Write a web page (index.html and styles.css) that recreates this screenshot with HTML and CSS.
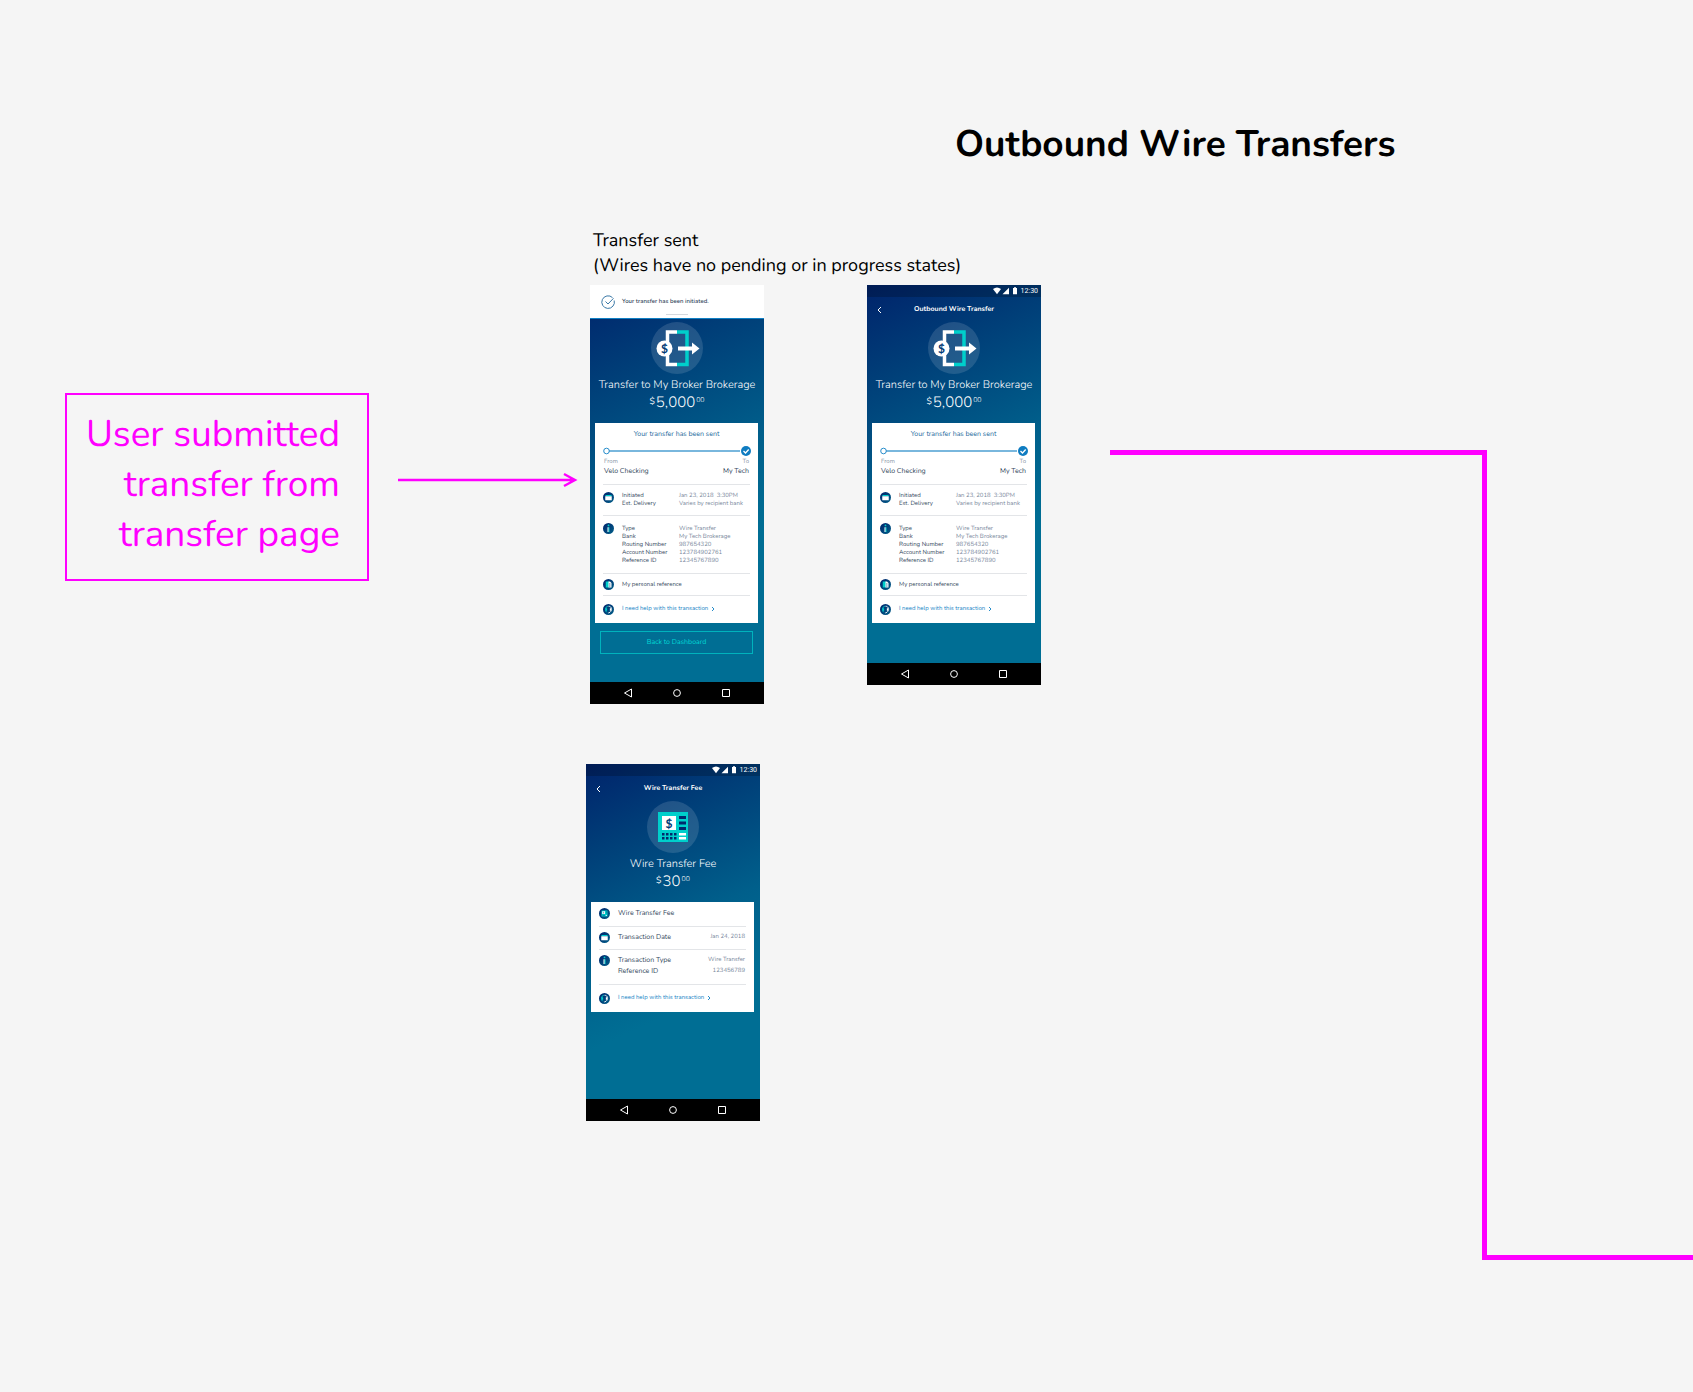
FILE: index.html
```html
<!DOCTYPE html>
<html lang="en">
<head>
<meta charset="utf-8">
<title>Outbound Wire Transfers</title>
<link rel="stylesheet" href="styles.css">
</head>
<body>
<svg class="defs" aria-hidden="true">
  <linearGradient id="disc" x1="0" y1="0" x2="1" y2="1"><stop offset="0" stop-color="#00226b"/><stop offset="1" stop-color="#006089"/></linearGradient>
  <symbol id="i-transfer" viewBox="0 0 52 52">
    <circle cx="26" cy="26" r="26" fill="#fff" fill-opacity=".13"/>
    <path d="M26 10H16.500V42.500H26" fill="none" stroke="#fff" stroke-width="3.500"/>
    <path d="M26 10H36V42.500H26" fill="none" stroke="#00cfcb" stroke-width="3.500"/>
    <path d="M27 24.500H41V20.500L48.500 26.500L41 32.500V28.500H27Z" fill="#fff"/>
    <circle cx="13.500" cy="26.500" r="8" fill="#fff"/>
  </symbol>
  <symbol id="i-fee" viewBox="0 0 52 52">
    <circle cx="26" cy="26" r="26" fill="#fff" fill-opacity=".13"/>
    <path d="M11 11H41V41H11Z" fill="#00cfcb"/>
    <path d="M15 15H29V29H15ZM32 32H39V34.500H32ZM32 36H39V38.500H32Z" fill="#fff"/>
    <path d="M32 15H39V18H32ZM32 20.500H39V23.500H32ZM32 26H39V29H32ZM15 32H17.500V34.500H15ZM19 32H21.500V34.500H19ZM23 32H25.500V34.500H23ZM27 32H29.500V34.500H27ZM15 36H17.500V38.500H15ZM19 36H21.500V38.500H19ZM23 36H25.500V38.500H23ZM27 36H29.500V38.500H27Z" fill="#002a6c"/>
  </symbol>
  <symbol id="i-calendar" viewBox="0 0 22 22">
    <circle cx="11" cy="11" r="11" fill="url(#disc)"/>
    <path d="M5 6H17V8.500H5Z" fill="#00cfcb"/><path d="M4.500 8.500H17.500V16.500H4.500Z" fill="#fff"/>
  </symbol>
  <symbol id="i-info" viewBox="0 0 22 22">
    <circle cx="11" cy="11" r="11" fill="url(#disc)"/>
    <circle cx="11" cy="4.800" r="1.800" fill="#00cfcb"/><path d="M9 8.500H11.500V18H9Z" fill="#fff"/><path d="M11.200 8.500H13V18H11.200Z" fill="#00cfcb"/>
  </symbol>
  <symbol id="i-note" viewBox="0 0 22 22">
    <circle cx="11" cy="11" r="11" fill="url(#disc)"/>
    <path d="M5.500 5H12V17H5.500Z" fill="#00cfcb"/><path d="M11 5H14L17 8V17H11Z" fill="#fff"/><path d="M12 9.500H15M12 12H15M12 14.500H15" stroke="#00457a"/>
  </symbol>
  <symbol id="i-help" viewBox="0 0 22 22">
    <circle cx="11" cy="11" r="11" fill="url(#disc)"/>
    <path d="M9.500 4.500C4 6 3.500 13 7.500 16.500" fill="none" stroke="#00cfcb" stroke-width="2"/><path d="M11 4.500C17.500 4.500 19.500 12 14 16.500L10.500 18" fill="none" stroke="#fff" stroke-width="1.800"/><path d="M7 8.500V13.500" stroke="#00cfcb" stroke-width="2.500"/><path d="M15 8.500V13.500" stroke="#fff" stroke-width="2.500"/>
  </symbol>
  <symbol id="i-feemini" viewBox="0 0 22 22">
    <circle cx="11" cy="11" r="11" fill="url(#disc)"/>
    <path d="M5 5H17V17H5Z" fill="#00cfcb"/><path d="M6.500 6.500H12V12H6.500ZM13.500 14H16V15.500H13.500Z" fill="#fff"/><path d="M9.300 7.500V11M14 7.500H16M14 10H16M7 14.500H12" stroke="#003a75" stroke-width="1.100"/>
  </symbol>
  <symbol id="i-status" viewBox="0 0 24 8">
    <path d="M0 2Q4 -1 8 2L4 7.200Z" fill="#fff"/><path d="M16 .8V7.200H9.500Z" fill="#fff"/><path d="M20 1H21V.3H23V1H24V7.200H20Z" fill="#fff"/>
  </symbol>
  <symbol id="i-back" viewBox="0 0 8 8"><path d="M6 1L3 4L6 7" fill="none" stroke="#fff" stroke-width="1"/></symbol>
  <symbol id="i-chevron" viewBox="0 0 4 6"><path d="M1 1L3 3L1 5" fill="none" stroke="#1080c4" stroke-width=".9"/></symbol>
  <symbol id="i-done" viewBox="0 0 14 14">
    <path d="M13.200 5.500A6.300 6.300 0 1 1 11.500 2.600" fill="none" stroke="#24699c" stroke-width=".9"/><path d="M4.500 6.500L7 9L12.500 3.300" fill="none" stroke="#24699c" stroke-width=".9"/>
  </symbol>
  <symbol id="i-track" viewBox="0 0 148 10">
    <path d="M6 5H137" stroke="#4c9fd2" stroke-width="1.600"/>
    <circle cx="3.500" cy="5" r="2.800" fill="#fff" stroke="#1080c4" stroke-width=".9"/>
    <circle cx="143" cy="5" r="5" fill="#0f7cc1"/><path d="M140.500 5L142.500 7L145.700 3.500" fill="none" stroke="#fff" stroke-width="1.300"/>
  </symbol>
  <symbol id="i-navback" viewBox="0 0 10 10"><path d="M8.500 1V9L1.500 5Z" fill="none" stroke="#fff"/></symbol>
  <symbol id="i-navhome" viewBox="0 0 10 10"><circle cx="5" cy="5" r="3.400" fill="none" stroke="#fff"/></symbol>
  <symbol id="i-navapps" viewBox="0 0 10 10"><path d="M1.500 1.500H8.500V8.500H1.500Z" fill="none" stroke="#fff"/></symbol>
</svg>

<main class="canvas">
  <h1 class="board-title">Outbound Wire Transfers</h1>
  <p class="caption">Transfer sent<br>(Wires have no pending or in progress states)</p>
  <p class="trigger">User submitted transfer from transfer page</p>
  <svg class="arrow" viewBox="0 0 180 16" aria-hidden="true"><path d="M0 8H177M166 2L177 8L166 14" fill="none" stroke="#f0f" stroke-width="2.400"/></svg>
  <div class="link-down"></div>
  <div class="link-out"></div>

  <article class="phone phone-initiated">
    <div class="toast"><svg class="done"><use href="#i-done"/></svg><span>Your transfer has been initiated.</span><i class="handle"></i></div>
    <header class="hero hero-tight">
      <svg class="hero-icon" viewBox="0 0 52 52"><use href="#i-transfer"/><text x="13.500" y="31" text-anchor="middle" class="dollar">$</text></svg>
      <h2>Transfer to My Broker Brokerage</h2>
      <p class="amount"><span class="cur">$</span>5,000<span class="minor">00</span></p>
    </header>
    <section class="card">
      <h3>Your transfer has been sent</h3>
      <svg class="track"><use href="#i-track"/></svg>
      <div class="ends"><p><small>From</small>Velo Checking</p><p><small>To</small>My Tech</p></div>
      <div class="row details"><svg class="icon"><use href="#i-calendar"/></svg>
        <dl><dt>Initiated</dt><dd>Jan 23, 2018 &nbsp;3:30PM</dd><dt>Est. Delivery</dt><dd>Varies by recipient bank</dd></dl></div>
      <div class="row details"><svg class="icon"><use href="#i-info"/></svg>
        <dl class="long"><dt>Type</dt><dd>Wire Transfer</dd><dt>Bank</dt><dd>My Tech Brokerage</dd><dt>Routing Number</dt><dd>987654320</dd><dt>Account Number</dt><dd>123784902761</dd><dt>Reference ID</dt><dd>12345767890</dd></dl></div>
      <div class="row note"><svg class="icon"><use href="#i-note"/></svg><span>My personal reference</span></div>
      <div class="row help"><svg class="icon"><use href="#i-help"/></svg><a href="#help">I need help with this transaction <svg class="chevron"><use href="#i-chevron"/></svg></a></div>
    </section>
    <button class="dashboard" type="button">Back to Dashboard</button>
    <nav class="softkeys"><svg><use href="#i-navback"/></svg><svg><use href="#i-navhome"/></svg><svg><use href="#i-navapps"/></svg></nav>
  </article>

  <article class="phone phone-sent">
    <div class="status"><svg><use href="#i-status"/></svg><span>12:30</span></div>
    <div class="appbar"><button class="back" type="button" aria-label="Back"><svg><use href="#i-back"/></svg></button><strong>Outbound Wire Transfer</strong></div>
    <header class="hero">
      <svg class="hero-icon" viewBox="0 0 52 52"><use href="#i-transfer"/><text x="13.500" y="31" text-anchor="middle" class="dollar">$</text></svg>
      <h2>Transfer to My Broker Brokerage</h2>
      <p class="amount"><span class="cur">$</span>5,000<span class="minor">00</span></p>
    </header>
    <section class="card">
      <h3>Your transfer has been sent</h3>
      <svg class="track"><use href="#i-track"/></svg>
      <div class="ends"><p><small>From</small>Velo Checking</p><p><small>To</small>My Tech</p></div>
      <div class="row details"><svg class="icon"><use href="#i-calendar"/></svg>
        <dl><dt>Initiated</dt><dd>Jan 23, 2018 &nbsp;3:30PM</dd><dt>Est. Delivery</dt><dd>Varies by recipient bank</dd></dl></div>
      <div class="row details"><svg class="icon"><use href="#i-info"/></svg>
        <dl class="long"><dt>Type</dt><dd>Wire Transfer</dd><dt>Bank</dt><dd>My Tech Brokerage</dd><dt>Routing Number</dt><dd>987654320</dd><dt>Account Number</dt><dd>123784902761</dd><dt>Reference ID</dt><dd>12345767890</dd></dl></div>
      <div class="row note"><svg class="icon"><use href="#i-note"/></svg><span>My personal reference</span></div>
      <div class="row help"><svg class="icon"><use href="#i-help"/></svg><a href="#help">I need help with this transaction <svg class="chevron"><use href="#i-chevron"/></svg></a></div>
    </section>
    <nav class="softkeys"><svg><use href="#i-navback"/></svg><svg><use href="#i-navhome"/></svg><svg><use href="#i-navapps"/></svg></nav>
  </article>

  <article class="phone phone-fee">
    <div class="status"><svg><use href="#i-status"/></svg><span>12:30</span></div>
    <div class="appbar"><button class="back" type="button" aria-label="Back"><svg><use href="#i-back"/></svg></button><strong>Wire Transfer Fee</strong></div>
    <header class="hero">
      <svg class="hero-icon" viewBox="0 0 52 52"><use href="#i-fee"/><text x="22" y="26.500" text-anchor="middle" class="dollar">$</text></svg>
      <h2>Wire Transfer Fee</h2>
      <p class="amount"><span class="cur">$</span>30<span class="minor">00</span></p>
    </header>
    <section class="card fee-card">
      <div class="row fee"><svg class="icon"><use href="#i-feemini"/></svg><span>Wire Transfer Fee</span></div>
      <div class="row fee"><svg class="icon"><use href="#i-calendar"/></svg><dl class="spread"><dt>Transaction Date</dt><dd>Jan 24, 2018</dd></dl></div>
      <div class="row fee-type"><svg class="icon"><use href="#i-info"/></svg><dl class="spread"><dt>Transaction Type</dt><dd>Wire Transfer</dd><dt>Reference ID</dt><dd>123456789</dd></dl></div>
      <div class="row help"><svg class="icon"><use href="#i-help"/></svg><a href="#help">I need help with this transaction <svg class="chevron"><use href="#i-chevron"/></svg></a></div>
    </section>
    <nav class="softkeys"><svg><use href="#i-navback"/></svg><svg><use href="#i-navhome"/></svg><svg><use href="#i-navapps"/></svg></nav>
  </article>
</main>
</body>
</html>
```
FILE: styles.css
```css
* { box-sizing: border-box; }
body { margin: 0; background: #f5f5f5; color: #000; font-family: Nunito, Lato, sans-serif; text-rendering: geometricPrecision; }
h1, h2, h3, p, dl, dd { margin: 0; font-weight: 400; }
button { text-rendering: inherit; }
svg { display: block; flex: none; }
.defs { position: absolute; width: 0; height: 0; }

/* Board: the nodes and connectors sit freely on the canvas */
.canvas { position: relative; min-height: 100vh; overflow: hidden; }
.board-title, .caption, .trigger, .arrow, .link-down, .link-out, .phone { position: absolute; }
.board-title { left: 955px; top: 121px; font-size: 37px; line-height: 48px; font-weight: 700; white-space: nowrap; }
.caption { left: 593px; top: 229px; font-size: 18px; line-height: 25px; white-space: nowrap; }
.trigger { left: 65px; top: 393px; width: 304px; padding: 15px 27px 19px 16px; border: 2px solid #f0f; color: #f0f; font-size: 37px; line-height: 50px; text-align: right; }
.arrow { left: 398px; top: 472px; width: 180px; height: 16px; }
.link-down { left: 1110px; top: 450px; width: 377px; height: 810px; border-top: 5px solid #f0f; border-right: 5px solid #f0f; }
.link-out { left: 1482px; right: 0; top: 1255px; border-top: 5px solid #f0f; }

/* Phone screens */
.phone { display: flex; flex-direction: column; width: 174px; background: linear-gradient(155deg, #00236b 0%, #003e78 20%, #005f8b 46%, #006e94 66%); color: #fff; }
.phone-initiated { left: 590px; top: 285px; }
.phone-sent { left: 867px; top: 285px; }
.phone-fee { left: 586px; top: 764px; }

.toast { position: relative; display: flex; align-items: center; gap: 7px; height: 34px; padding: 0 11px; background: #fff; border-bottom: 1px solid #1080c4; color: #33475c; font-size: 6px; font-weight: 600; }
.done { width: 14px; height: 14px; }
.handle { position: absolute; left: 76px; bottom: 3px; width: 22px; height: 1px; background: #d5d9de; }

.status { display: flex; justify-content: flex-end; align-items: center; gap: 4px; height: 12px; padding-right: 3px; background: rgba(0, 0, 0, .2); font: 7px/8px Roboto, sans-serif; }
.status svg { width: 24px; height: 8px; }
.appbar { display: grid; grid-template-columns: 8px 1fr 8px; align-items: center; height: 25px; padding: 0 8px; font-size: 7px; line-height: 10px; text-align: center; }
.back { padding: 0; border: 0; background: none; }
.back svg { width: 8px; height: 8px; }

.hero { text-align: center; }
.hero-tight { padding-top: 3px; }
.hero-icon { width: 52px; height: 52px; margin: 0 auto 3px; }
.dollar { font: 700 12px Lato, sans-serif; fill: #003a75; }
.hero h2 { font-size: 11px; line-height: 16px; font-weight: 300; white-space: nowrap; }
.amount { display: flex; justify-content: center; align-items: flex-start; gap: 1px; font-size: 15px; line-height: 20px; font-weight: 300; }
.minor { font-size: 7px; line-height: 16px; }
.cur { font-size: 9px; line-height: 18px; font-weight: 400; }

.card { margin: 10px 6px 0 5px; padding: 7px 8px 0; background: #fff; color: #33475c; font-size: 7px; line-height: 10px; }
.card h3 { color: #24699c; font-size: 7px; line-height: 10px; text-align: center; }
.track { width: 148px; height: 10px; margin-top: 6px; }
.ends { display: flex; justify-content: space-between; padding: 2px 1px 7px; }
.ends p:last-child { text-align: right; }
.ends small { display: block; margin-bottom: 1px; color: #8492a3; font-size: 6px; line-height: 8px; }

.row { display: flex; align-items: center; gap: 8px; border-top: 1px solid #e3e5e8; }
.icon { width: 11px; height: 11px; }
.details { align-items: flex-start; padding: 7px 0; }
.details dl { display: grid; grid-template-columns: 57px 1fr; font-size: 6px; line-height: 8px; white-space: nowrap; }
.details .long { padding: 2px 0 1px; }
dd { color: #77869a; }
.note { height: 22px; font-size: 6px; }
.help { height: 28px; padding-bottom: 1px; font-size: 6px; }
.help a { display: flex; align-items: center; gap: 3px; color: #1080c4; text-decoration: none; white-space: nowrap; }
.chevron { width: 4px; height: 6px; }

.fee-card { padding-top: 0; }
.fee { height: 23px; padding-bottom: 1px; }
.fee:first-child { height: 24px; border-top: 0; }
.fee-type { align-items: flex-start; padding: 5px 0 7px; }
.spread { display: grid; flex: 1; grid-template-columns: 1fr auto; padding-right: 1px; line-height: 11px; }
.spread dd { font-size: 6px; text-align: right; }

.dashboard { height: 23px; margin: 8px 11px 0 10px; padding: 0; border: 1px solid #00b3bd; background: none; color: #00d8d4; font: 7px/10px Nunito, Lato, sans-serif; }
.softkeys { display: flex; justify-content: center; align-items: center; gap: 39px; height: 22px; margin-top: 40px; background: #000; }
.softkeys svg { width: 10px; height: 10px; }
.dashboard + .softkeys { margin-top: 28px; }
.fee-card + .softkeys { margin-top: 87px; }
```
